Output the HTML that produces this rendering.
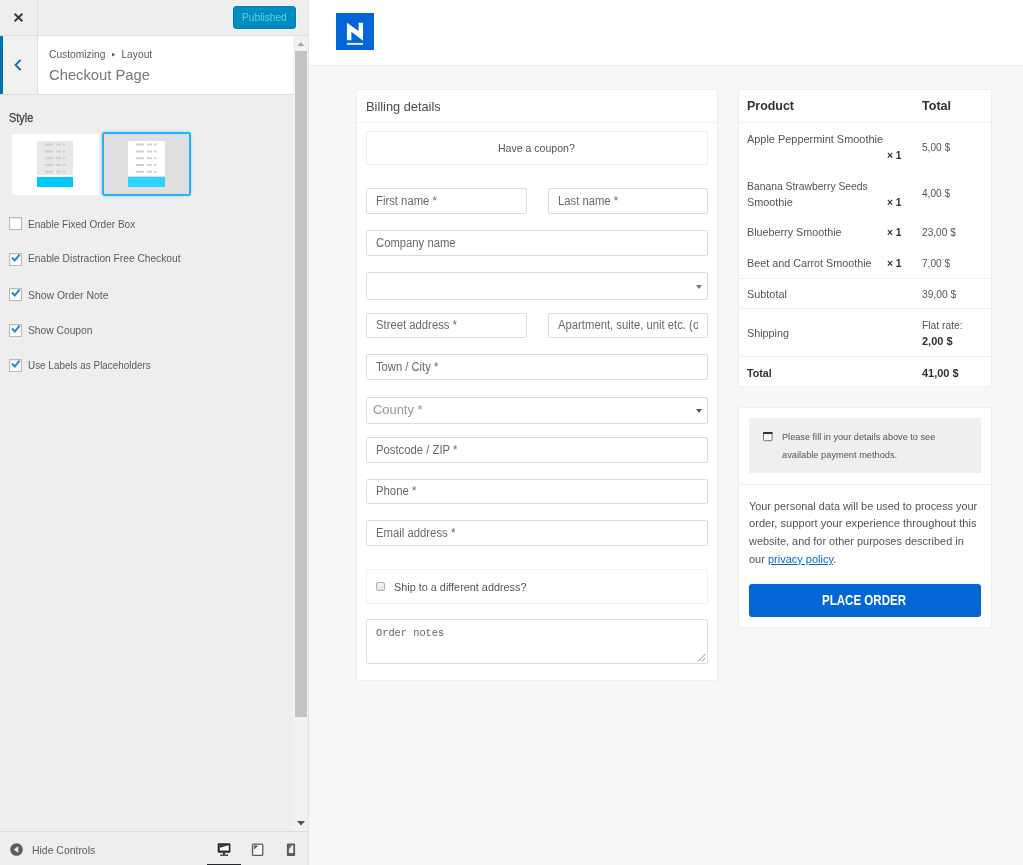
<!DOCTYPE html>
<html><head><meta charset="utf-8">
<style>
*{box-sizing:border-box;margin:0;padding:0}
html,body{width:1023px;height:865px;overflow:hidden;background:#f7f7f7;font-family:"Liberation Sans",sans-serif;}
.a{position:absolute}
.t{position:absolute;white-space:nowrap;line-height:1}
#side{left:0;top:0;width:308px;height:865px;background:#eee}
#sideborder{left:308px;top:0;width:1px;height:865px;background:#e2e2e2}
#prevhead{left:309px;top:0;width:714px;height:65px;background:#fff}
.inp{position:absolute;background:#fff;border:1px solid #ddd;border-radius:2px}
.ph{position:absolute;white-space:nowrap;font-size:12.5px;color:#6a6a6a;line-height:1}
.card{position:absolute;background:#fff;border:1px solid #f0f0f0}
.cb{position:absolute;left:9px;width:13px;height:13px;background:#fff;border:1px solid #b4b9be;box-shadow:inset 0 1px 2px rgba(0,0,0,.1)}
.lbl{position:absolute;left:28px;font-size:11.5px;color:#555d66;white-space:nowrap;line-height:1}
.ot{position:absolute;white-space:nowrap;font-size:11.5px;color:#555;line-height:1}
.b{font-weight:bold;color:#333}
</style></head><body>
<div id="root" class="a" style="left:0;top:0;width:1023px;height:865px;will-change:transform">
<!-- SIDEBAR -->
<div id="side" class="a"></div>
<div id="sideborder" class="a"></div>

<!-- header bar -->
<div class="a" style="left:0;top:35px;width:308px;height:1px;background:#ddd"></div>
<div class="a" style="left:37px;top:0;width:1px;height:35px;background:#ddd"></div>
<svg class="a" style="left:13.1px;top:12.4px" width="11" height="11" viewBox="0 0 11 11"><path d="M1.6 1.8 L9.4 9.2 M9.4 1.8 L1.6 9.2" stroke="#32373c" stroke-width="1.9" fill="none"/></svg>
<div class="a" style="left:233px;top:6px;width:63px;height:23px;background:#008ec2;border:1px solid #007cb2;border-radius:3px;box-shadow:0 0 0 1px rgba(255,255,255,.55)"></div>
<div class="t" id="pub" style="transform:scaleX(0.9028);transform-origin:0 0;left:242px;top:11.8px;font-size:11.3px;color:#66c6e4">Published</div>
<!-- section title -->
<div class="a" style="left:0;top:36px;width:293px;height:58px;background:#fff"></div>
<div class="a" style="left:0;top:94px;width:293px;height:1px;background:#ddd"></div>
<div class="a" style="left:0;top:36px;width:38px;height:58px;background:#f1f1f1;border-right:1px solid #ddd"></div>
<div class="a" style="left:0;top:36px;width:3px;height:58px;background:#0073aa"></div>
<svg class="a" style="left:14px;top:59px" width="8" height="12" viewBox="0 0 8 12"><path d="M6.5 1 L1.5 6 L6.5 11" stroke="#0073aa" stroke-width="1.8" fill="none"/></svg>
<div class="t" id="crumb" style="transform:scaleX(0.8919);transform-origin:0 0;left:49px;top:49px;font-size:11.5px;color:#555d66">Customizing <span style="font-size:5px;position:relative;top:-2px;margin:0 3.5px 0 4px">&#9654;</span> Layout</div>
<div class="t" id="title" style="transform:scaleX(0.9528);transform-origin:0 0;left:49px;top:67px;font-size:15.5px;color:#72777c;font-weight:normal">Checkout Page</div>
<!-- scrollbar -->
<div class="a" style="left:293px;top:36px;width:15px;height:829px;background:#f1f1f1"></div>
<div class="a" style="left:295px;top:51px;width:12px;height:666px;background:#c3c3c3"></div>
<svg class="a" style="left:297px;top:42px" width="8" height="4" viewBox="0 0 8 4"><path d="M0.3 4 L3.8 0.2 L7.3 4 Z" fill="#a3a3a3"/></svg>
<svg class="a" style="left:297px;top:821px" width="8" height="5" viewBox="0 0 8 5"><path d="M0 0 L8 0 L4 4.5 Z" fill="#505050"/></svg>
<!-- style -->
<div class="t" id="style" style="transform:scaleX(0.8706);transform-origin:0 0;left:9px;top:112px;font-size:12.5px;color:#444;-webkit-text-stroke:0.3px #444">Style</div>
<div class="a" style="left:12px;top:134px;width:87px;height:61px;background:#fff"></div>
<div class="a" style="left:37px;top:141px;width:36px;height:34px;background:#e8e8e8"></div>
<div class="a" style="left:37px;top:177px;width:36px;height:10px;background:#00c8ff"></div>
<div class="a" style="left:102px;top:132px;width:89px;height:64px;background:#dfdfdf;border:2px solid #1fb2fd;border-radius:3px;box-shadow:0 0 3px rgba(30,170,255,.45)"></div>
<div class="a" style="left:128px;top:141px;width:37px;height:35px;background:#fff"></div>
<div class="a" style="left:128px;top:177px;width:37px;height:10px;background:#2ed3ff"></div>
<svg class="a" style="left:37px;top:140.3px" width="37" height="35"><g stroke="#d0d0d0" stroke-width="2"><path d="M8 4.6h8m3 0h5m2 0h2.5M8 11.4h8m3 0h5m2 0h2.5M8 18.3h8m3 0h5m2 0h2.5M8 24.9h8m3 0h5m2 0h2.5M8 31.7h8m3 0h5m2 0h2.5"/></g></svg>
<svg class="a" style="left:128px;top:140.3px" width="37" height="35"><g stroke="#d2d2d2" stroke-width="2"><path d="M8 4.6h8m3 0h5m2 0h2.5M8 11.4h8m3 0h5m2 0h2.5M8 18.3h8m3 0h5m2 0h2.5M8 24.9h8m3 0h5m2 0h2.5M8 31.7h8m3 0h5m2 0h2.5"/></g></svg>
<!-- checkboxes -->
<div class="cb" style="top:217px"></div>
<div class="cb" style="top:253px"></div>
<div class="cb" style="top:288px"></div>
<div class="cb" style="top:324px"></div>
<div class="cb" style="top:359px"></div>
<svg class="a ck" style="left:10.5px;top:253.4px" width="10" height="9" viewBox="0 0 10 9"><path d="M1 4.5 L3.8 7.5 L8.6 1.6" stroke="#1e8cbe" stroke-width="2" fill="none"/></svg>
<svg class="a ck" style="left:10.5px;top:288.4px" width="10" height="9" viewBox="0 0 10 9"><path d="M1 4.5 L3.8 7.5 L8.6 1.6" stroke="#1e8cbe" stroke-width="2" fill="none"/></svg>
<svg class="a ck" style="left:10.5px;top:324.4px" width="10" height="9" viewBox="0 0 10 9"><path d="M1 4.5 L3.8 7.5 L8.6 1.6" stroke="#1e8cbe" stroke-width="2" fill="none"/></svg>
<svg class="a ck" style="left:10.5px;top:359.4px" width="10" height="9" viewBox="0 0 10 9"><path d="M1 4.5 L3.8 7.5 L8.6 1.6" stroke="#1e8cbe" stroke-width="2" fill="none"/></svg>
<div class="lbl" id="l1" style="transform:scaleX(0.8734);transform-origin:0 0;top:219px">Enable Fixed Order Box</div>
<div class="lbl" id="l2" style="transform:scaleX(0.8869);transform-origin:0 0;top:253px">Enable Distraction Free Checkout</div>
<div class="lbl" id="l3" style="transform:scaleX(0.9059);transform-origin:0 0;top:290px">Show Order Note</div>
<div class="lbl" id="l4" style="transform:scaleX(0.8927);transform-origin:0 0;top:325px">Show Coupon</div>
<div class="lbl" id="l5" style="transform:scaleX(0.8614);transform-origin:0 0;top:360px">Use Labels as Placeholders</div>
<!-- footer -->
<div class="a" style="left:0;top:831px;width:308px;height:1px;background:#ddd"></div>
<div class="a" style="left:0;top:832px;width:308px;height:33px;background:#eee"></div>
<svg class="a" style="left:10.3px;top:843.4px" width="13" height="13" viewBox="0 0 13 13"><circle cx="6.5" cy="6.5" r="6.3" fill="#555d66"/><path d="M8.3 3.2 L3.6 6.5 L8.3 9.8 Z" fill="#eee"/></svg>
<div class="t" id="hide" style="transform:scaleX(0.9071);transform-origin:0 0;left:32px;top:845px;font-size:11.5px;color:#555d66">Hide Controls</div>

<svg class="a" style="left:217px;top:843px" width="14" height="13" viewBox="0 0 14 13"><rect x="0.7" y="0.3" width="12.7" height="9.5" rx="1" fill="#23282d"/><rect x="2.7" y="2.3" width="9.1" height="5.3" fill="#f7f7f7"/><path d="M2.7 2.3 H11.8 L2.7 4.8 Z" fill="#23282d"/><rect x="6" y="9.8" width="2" height="1.8" fill="#23282d"/><rect x="3.2" y="11.5" width="7.8" height="1.3" fill="#23282d"/></svg>
<svg class="a" style="left:251px;top:843px" width="13" height="14" viewBox="0 0 13 14"><rect x="1.5" y="1.2" width="10.3" height="11.2" rx="1" fill="#f5f5f5" stroke="#555d66" stroke-width="1.3"/><path d="M2.9 2.6 H7.6 L2.9 6.7 Z" fill="#555d66"/></svg>
<svg class="a" style="left:286px;top:843px" width="10" height="14" viewBox="0 0 10 14"><rect x="0.9" y="0.6" width="8.2" height="12.4" rx="1" fill="#555d66"/><rect x="2.9" y="2.3" width="4.4" height="7.8" fill="#ececec"/><path d="M2.9 2.3 H6 L2.9 6.3 Z" fill="#555d66"/></svg>
<div class="a" style="left:207px;top:864px;width:34px;height:1px;background:#23282d"></div>
<div id="prevhead" class="a"></div>
<div class="a" style="left:309px;top:65px;width:714px;height:1px;background:#f0f0f0"></div>

<!-- logo -->
<div class="a" style="left:336px;top:13px;width:38px;height:37px;background:#0366d6"></div>
<svg class="a" style="left:346px;top:22px" width="18" height="24" viewBox="0 0 18 24"><path d="M0.93 0.7 L12.58 9.03 V0.7 H17.02 V18.74 L5.36 9.86 V18.19 H0.93 Z" fill="#fff"/><rect x="0.93" y="20.9" width="16.1" height="2" fill="#e4edfa"/></svg>
<!-- billing card -->
<div class="card" style="left:356px;top:89px;width:362px;height:592px"></div>
<div class="a" style="left:357px;top:122px;width:360px;height:1px;background:#f0f0f0"></div>
<div class="t" id="bill" style="transform:scaleX(0.9845);transform-origin:0 0;left:366px;top:100px;font-size:13px;color:#4d4d4d">Billing details</div>
<div class="a" style="left:366px;top:131px;width:342px;height:34px;border:1px solid #eee;background:#fff"></div>
<div class="t" id="coupon" style="transform:scaleX(0.9168);transform-origin:0 0;left:498px;top:143px;font-size:11.5px;color:#555">Have a coupon?</div>
<div class="inp" style="left:366px;top:188px;width:161px;height:26px"></div>
<div class="inp" style="left:548px;top:188px;width:160px;height:26px"></div>
<div class="inp" style="left:366px;top:230px;width:342px;height:26px"></div>
<div class="inp" style="left:366px;top:272px;width:342px;height:28px"></div>
<div class="inp" style="left:366px;top:313px;width:161px;height:25px"></div>
<div class="inp" style="left:548px;top:313px;width:160px;height:25px"><div class="a" style="left:0;top:0;width:149px;height:23px;overflow:hidden"><div class="ph" style="transform-origin:0 0;transform:scaleX(.903);left:9px;top:5px">Apartment, suite, unit etc. (optional)</div></div></div>
<div class="inp" style="left:366px;top:354px;width:342px;height:26px"></div>
<div class="inp" style="left:366px;top:397px;width:342px;height:27px"></div>
<div class="inp" style="left:366px;top:437px;width:342px;height:26px"></div>
<div class="inp" style="left:366px;top:479px;width:342px;height:25px"></div>
<div class="inp" style="left:366px;top:520px;width:342px;height:26px"></div>
<div class="ph" id="p1" style="transform:scaleX(0.9037);transform-origin:0 0;left:376px;top:195px">First name *</div>
<div class="ph" id="p2" style="transform:scaleX(0.9008);transform-origin:0 0;left:558px;top:195px">Last name *</div>
<div class="ph" id="p3" style="transform:scaleX(0.9020);transform-origin:0 0;left:376px;top:237px">Company name</div>
<div class="ph" id="p4" style="transform:scaleX(0.9036);transform-origin:0 0;left:376px;top:319px">Street address *</div>
<div class="ph" id="p5" style="transform:scaleX(0.8968);transform-origin:0 0;left:376px;top:361px">Town / City *</div>
<div class="t" id="county" style="transform:scaleX(0.9925);transform-origin:0 0;left:373px;top:403px;font-size:13px;color:#999">County *</div>
<div class="ph" id="p6" style="transform:scaleX(0.9045);transform-origin:0 0;left:376px;top:444px">Postcode / ZIP *</div>
<div class="ph" id="p7" style="transform:scaleX(0.9059);transform-origin:0 0;left:376px;top:485px">Phone *</div>
<div class="ph" id="p8" style="transform:scaleX(0.9058);transform-origin:0 0;left:376px;top:527px">Email address *</div>
<svg class="a" style="left:696px;top:285px" width="6" height="4" viewBox="0 0 6 4"><path d="M0 0H6L3 4Z" fill="#777"/></svg>
<svg class="a" style="left:696px;top:409px" width="6" height="4" viewBox="0 0 6 4"><path d="M0 0H6L3 4Z" fill="#555"/></svg>
<div class="a" style="left:366px;top:569px;width:342px;height:35px;border:1px solid #f0f0f0;background:#fff"></div>
<div class="a" style="left:376px;top:582px;width:9px;height:9px;border:1px solid #b0b0b0;border-radius:2px;background:linear-gradient(#f6f6f6,#e2e2e2)"></div>
<div class="t" id="ship" style="transform:scaleX(0.9435);transform-origin:0 0;left:394px;top:582px;font-size:11.5px;color:#555">Ship to a different address?</div>
<div class="inp" style="left:366px;top:619px;width:342px;height:45px"></div>
<div class="t" id="notes" style="transform:scaleX(0.9391);transform-origin:0 0;left:376px;top:628px;font-family:'Liberation Mono',monospace;font-size:11px;color:#666">Order notes</div>
<svg class="a" style="left:697px;top:653px" width="9" height="9" viewBox="0 0 9 9"><path d="M8.5 1 L1 8.5 M8.5 5 L5 8.5" stroke="#808080" stroke-width="0.9" fill="none"/></svg>

<!-- order table -->
<div class="card" style="left:738px;top:89px;width:254px;height:298px"></div>
<div class="a" style="left:739px;top:122px;width:252px;height:1px;background:#f0f0f0"></div>
<div class="a" style="left:739px;top:278px;width:252px;height:1px;background:#f0f0f0"></div>
<div class="a" style="left:739px;top:308px;width:252px;height:1px;background:#f0f0f0"></div>
<div class="a" style="left:739px;top:356px;width:252px;height:1px;background:#f0f0f0"></div>
<div class="ot b" id="o_product" style="transform:scaleX(0.9567);transform-origin:0 0;left:747px;top:99px;font-size:13px">Product</div>
<div class="ot b" id="o_total" style="transform:scaleX(0.9637);transform-origin:0 0;left:922px;top:99px;font-size:13px">Total</div>
<div class="ot" id="o_a1" style="transform:scaleX(0.9497);transform-origin:0 0;left:747px;top:134px">Apple Peppermint Smoothie</div>
<div class="ot b" id="o_x1" style="transform:scaleX(0.8889);transform-origin:0 0;left:887px;top:150px">× 1</div>
<div class="ot" id="o_v1" style="transform:scaleX(0.8754);transform-origin:0 0;left:922px;top:142px">5,00 $</div>
<div class="ot" id="o_b1" style="transform:scaleX(0.8998);transform-origin:0 0;left:747px;top:181px">Banana Strawberry Seeds</div>
<div class="ot" id="o_b2" style="transform:scaleX(0.9425);transform-origin:0 0;left:747px;top:197px">Smoothie</div>
<div class="ot b" id="o_x2" style="transform:scaleX(0.8889);transform-origin:0 0;left:887px;top:197px">× 1</div>
<div class="ot" id="o_v2" style="transform:scaleX(0.8754);transform-origin:0 0;left:922px;top:188px">4,00 $</div>
<div class="ot" id="o_c1" style="transform:scaleX(0.9366);transform-origin:0 0;left:747px;top:227px">Blueberry Smoothie</div>
<div class="ot b" id="o_x3" style="transform:scaleX(0.8889);transform-origin:0 0;left:887px;top:227px">× 1</div>
<div class="ot" id="o_v3" style="transform:scaleX(0.8808);transform-origin:0 0;left:922px;top:227px">23,00 $</div>
<div class="ot" id="o_d1" style="transform:scaleX(0.9371);transform-origin:0 0;left:747px;top:258px">Beet and Carrot Smoothie</div>
<div class="ot b" id="o_x4" style="transform:scaleX(0.8889);transform-origin:0 0;left:887px;top:258px">× 1</div>
<div class="ot" id="o_v4" style="transform:scaleX(0.8754);transform-origin:0 0;left:922px;top:258px">7,00 $</div>
<div class="ot" id="o_sub" style="transform:scaleX(0.9454);transform-origin:0 0;left:747px;top:289px">Subtotal</div>
<div class="ot" id="o_subv" style="transform:scaleX(0.8886);transform-origin:0 0;left:922px;top:289px">39,00 $</div>
<div class="ot" id="o_shp" style="transform:scaleX(0.9382);transform-origin:0 0;left:747px;top:328px">Shipping</div>
<div class="ot" id="o_flat" style="transform:scaleX(0.8967);transform-origin:0 0;left:922px;top:320px">Flat rate:</div>
<div class="ot b" id="o_flatv" style="transform:scaleX(0.9536);transform-origin:0 0;left:922px;top:336px">2,00 $</div>
<div class="ot b" id="o_tot" style="transform:scaleX(0.9277);transform-origin:0 0;left:747px;top:368px">Total</div>
<div class="ot b" id="o_totv" style="transform:scaleX(0.9537);transform-origin:0 0;left:922px;top:368px">41,00 $</div>
<!-- payment card -->
<div class="card" style="left:738px;top:407px;width:254px;height:221px"></div>
<div class="a" style="left:749px;top:418px;width:232px;height:55px;background:#efefef"></div>
<div class="a" style="left:739px;top:484px;width:252px;height:1px;background:#f0f0f0"></div>
<svg class="a" style="left:763px;top:432px" width="10" height="10" viewBox="0 0 10 10"><rect x="0.5" y="0.5" width="8.6" height="8.2" rx="0.8" fill="#f6f6f6" stroke="#666" stroke-width="0.9"/><rect x="0.1" y="0.1" width="9.4" height="2" rx="0.5" fill="#333"/></svg>
<div class="ot" id="pm1" style="transform:scaleX(0.9643);transform-origin:0 0;left:782px;top:432px;font-size:9.5px">Please fill in your details above to see</div>
<div class="ot" id="pm2" style="transform:scaleX(0.9738);transform-origin:0 0;left:782px;top:450px;font-size:9.5px">available payment methods.</div>
<div class="ot" id="pp1" style="transform:scaleX(0.9460);transform-origin:0 0;left:749px;top:501px;font-size:11.5px">Your personal data will be used to process your</div>
<div class="ot" id="pp2" style="transform:scaleX(0.9670);transform-origin:0 0;left:749px;top:518px;font-size:11.5px">order, support your experience throughout this</div>
<div class="ot" id="pp3" style="transform:scaleX(0.9491);transform-origin:0 0;left:749px;top:536px;font-size:11.5px">website, and for other purposes described in</div>
<div class="ot" id="pp4" style="transform:scaleX(0.9561);transform-origin:0 0;left:749px;top:554px;font-size:11.5px">our <span style="color:#0366d6;text-decoration:underline">privacy policy</span>.</div>
<div class="a" style="left:749px;top:584px;width:232px;height:33px;background:#0366d6;border-radius:3px"></div>
<div class="t" id="place" style="transform:scaleX(0.8253);transform-origin:0 0;left:822px;top:593px;font-size:14px;font-weight:bold;color:#fff">PLACE ORDER</div>
</div>
</body></html>
